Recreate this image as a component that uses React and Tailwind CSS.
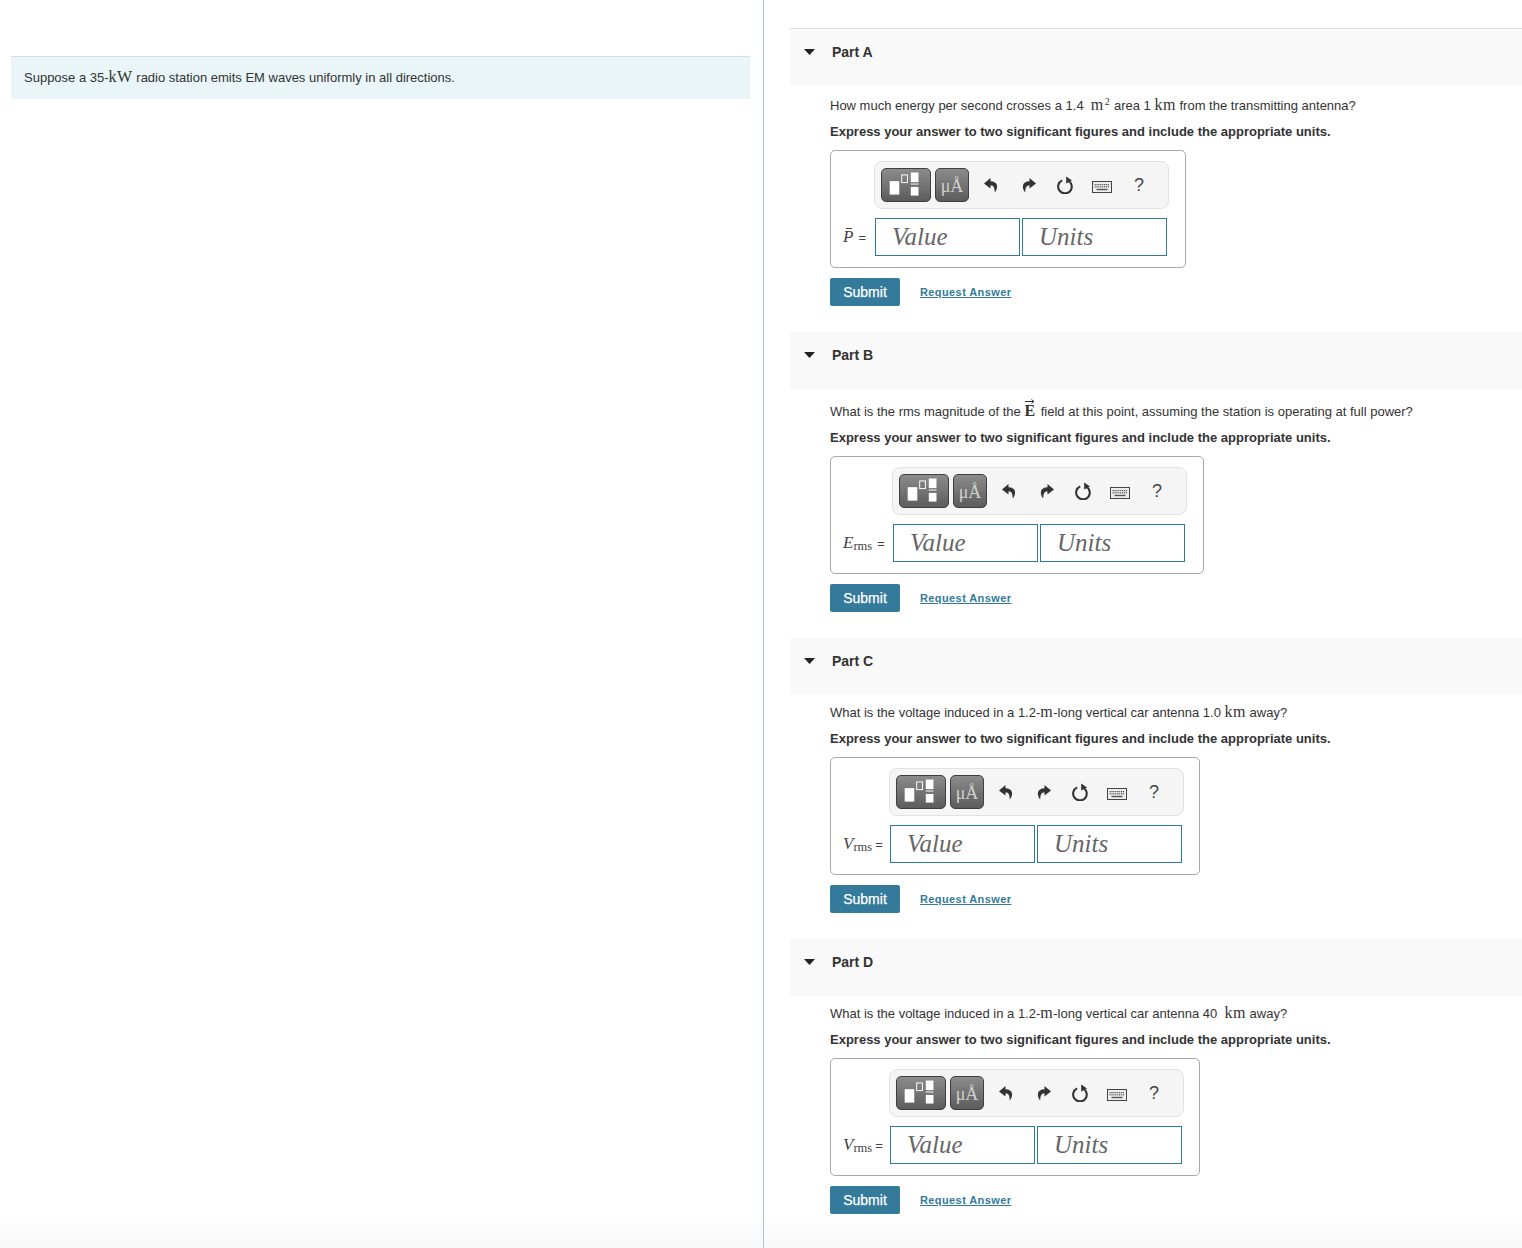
import React from "react";

function Math({ children }) {
  return <span className="font-['Liberation_Serif',serif] text-[16px] tracking-[0.5px] text-[#333]">{children}</span>;
}

function TemplateIcon() {
  return (
    <svg width="50" height="34" viewBox="0 0 50 34" className="block">
      <rect x="8" y="13" width="10" height="14" fill="#fff" />
      <rect x="20.5" y="6.5" width="6" height="8" fill="none" stroke="#fff" />
      <rect x="30" y="4" width="8" height="10" fill="#fff" />
      <rect x="30" y="15.5" width="8" height="1" fill="#fff" />
      <rect x="30" y="19" width="8" height="9" fill="#fff" />
    </svg>
  );
}

function ArrowIcon({ flip }) {
  return (
    <svg width="16" height="16" viewBox="0 0 16 16" className={flip ? "block -scale-x-100" : "block"}>
      <path d="M7.5 1 L1 6.4 L7.5 11.6 V8.6 C10.6 8.6 11.6 10.4 11.8 15.5 C15.6 10.6 15.2 4.4 7.5 4.2 Z" fill="#333" />
    </svg>
  );
}

function ResetIcon() {
  return (
    <svg width="16" height="18" viewBox="0 0 16 18" className="block">
      <path d="M5.2 4.4 A6.8 6.8 0 1 0 11.8 5" fill="none" stroke="#333" strokeWidth="2.1" />
      <path d="M9.2 0.4 L9.2 7.4 L15 4.6 Z" fill="#333" />
    </svg>
  );
}

function KeyboardIcon() {
  const keys = [];
  for (let i = 0; i < 8; i++) {
    keys.push(<rect key={"a" + i} x={2.5 + i * 1.9} y="3" width="1.2" height="1.2" fill="#555" />);
    keys.push(<rect key={"b" + i} x={2.5 + i * 1.9} y="5.2" width="1.2" height="1.2" fill="#555" />);
  }
  return (
    <svg width="20" height="12" viewBox="0 0 20 12" className="block">
      <rect x="0.5" y="0.5" width="19" height="11" fill="#eee" stroke="#444" />
      {keys}
      <rect x="4.5" y="7.8" width="11" height="1.4" fill="#555" />
    </svg>
  );
}

function AnswerBox({ label, indent, labelWidth, padRight }) {
  return (
    <div className={padRight + " mt-[8px] w-fit rounded-[5px] border border-[#a8a8a8] pt-[10px] pb-[11px] pl-[12px]"}>
      <div className={indent + " flex"}>
        <div className="h-[48px] w-[295px] rounded-[8px] border border-[#e2e2e2] bg-[#f5f5f5] -ml-px flex items-center pl-[6px] text-[#333]">
          <div className="h-[34px] w-[50px] rounded-[5px] border border-[#3f3f3f] bg-gradient-to-b from-[#8c8c8c] to-[#5c5c5c] flex items-center justify-center overflow-hidden">
            <TemplateIcon />
          </div>
          <div className="ml-[4px] h-[34px] w-[34px] rounded-[5px] border border-[#3f3f3f] bg-gradient-to-b from-[#8c8c8c] to-[#5c5c5c] flex items-center justify-center pt-[2px] font-['Liberation_Serif',serif] text-[18px] text-[#d0d0d0]">
            μÅ
          </div>
          <div className="ml-[14px]"><ArrowIcon /></div>
          <div className="ml-[22px]"><ArrowIcon flip /></div>
          <div className="ml-[20px]"><ResetIcon /></div>
          <div className="ml-[19px] mt-[3px]"><KeyboardIcon /></div>
          <div className="ml-[22px] font-['Liberation_Sans',sans-serif] text-[18px] text-[#444]">?</div>
        </div>
      </div>
      <div className="mt-[9px] flex items-center">
        <div className={labelWidth + " shrink-0 text-[13px] text-[#444] whitespace-nowrap"}>{label}</div>
        <div className="flex gap-[2px]">
          <div className="h-[38px] w-[145px] border border-[#2f7a9c] pl-[16px] font-['Liberation_Serif',serif] text-[25px] leading-[36px] italic text-[#666]">Value</div>
          <div className="h-[38px] w-[145px] border border-[#2f7a9c] pl-[16px] font-['Liberation_Serif',serif] text-[25px] leading-[36px] italic text-[#666]">Units</div>
        </div>
      </div>
    </div>
  );
}

function Part({ name, headerHeight, top, question, label, indent, labelWidth, padRight, last }) {
  return (
    <section className={last ? "" : "mb-[26px]"}>
      <div className={headerHeight + " bg-[#f9f9f9] flex items-start pt-[13px] pl-[14px]"}>
        <svg width="11" height="6" viewBox="0 0 11 6" className="mt-[7px] block">
          <path d="M0 0 H11 L5.5 6 Z" fill="#222" />
        </svg>
        <h2 className="ml-[17px] text-[14px] leading-[20px] font-bold text-[#333]">{name}</h2>
      </div>
      <div className={top + " pl-[40px] text-[13px] text-[#333]"}>
        <p className="h-[20px] leading-[20px] whitespace-nowrap">{question}</p>
        <p className="mt-[7px] h-[20px] leading-[20px] font-bold whitespace-nowrap">
          Express your answer to two significant figures and include the appropriate units.
        </p>
        <AnswerBox label={label} indent={indent} labelWidth={labelWidth} padRight={padRight} />
        <div className="mt-[10px] flex items-center">
          <button className="h-[28px] w-[70px] rounded-[2px] bg-[#337a9b] text-[14px] text-white [-webkit-text-stroke:0.25px_white]">Submit</button>
          <a className="ml-[20px] text-[11px] font-bold tracking-[0.4px] text-[#337a9b] underline">Request Answer</a>
        </div>
      </div>
    </section>
  );
}

const pLabel = (
  <span>
    <span className="relative font-['Liberation_Serif',serif] text-[17px] italic">
      P
      <span className="absolute left-[3px] top-[1px] h-px w-[6px] bg-[#444]" />
    </span>
    <span className="ml-[5px]">=</span>
  </span>
);

const eLabel = (
  <span>
    <span className="font-['Liberation_Serif',serif] text-[17px] italic">E</span>
    <span className="relative top-[2px] font-['Liberation_Serif',serif] text-[12.5px]">rms</span>
    <span className="ml-[5px]">=</span>
  </span>
);

const vLabel = (
  <span>
    <span className="font-['Liberation_Serif',serif] text-[17px] italic">V</span>
    <span className="relative top-[2px] font-['Liberation_Serif',serif] text-[12.5px]">rms</span>
    <span className="ml-[3px]">=</span>
  </span>
);

export default function App() {
  return (
    <div className="flex h-[1248px] relative overflow-hidden bg-white font-['Liberation_Sans',Arial,sans-serif]">
      <div className="relative z-10 w-[764px] shrink-0 border-r border-[#b9c3cc] pt-[56px] pl-[11px] pr-[13px]">
        <div className="h-[43px] border-t border-[#dcdcdc] bg-[#e9f5f7] pl-[13px] text-[13px] leading-[39px] text-[#333]">
          Suppose a 35-<Math>kW</Math> radio station emits EM waves uniformly in all directions.
        </div>
      </div>

      <div className="flex-1 pt-[28px] pl-[26px]">
        <div className="border-t border-[#dcdcdc]">
          <Part
            name="Part A"
            headerHeight="h-[56px]"
            top="pt-[10px]"
            indent="ml-[32px]"
            labelWidth="w-[32px]"
            padRight="pr-[16px]"
            label={pLabel}
            question={
              <>
                How much energy per second crosses a 1.4 &nbsp;<Math>m<sup className="ml-px text-[10px]">2</sup></Math> area 1 <Math>km</Math> from the transmitting antenna?
              </>
            }
          />
        </div>
        <Part
          name="Part B"
          headerHeight="h-[57px]"
          top="pt-[12px]"
          indent="ml-[50px]"
          labelWidth="w-[50px]"
          padRight="pr-[16px]"
          label={eLabel}
          question={
            <>
              What is the rms magnitude of the{" "}
              <span className="relative mr-[2px] font-['Liberation_Serif',serif] text-[16px] font-bold">
                E
                <svg width="10" height="5" viewBox="0 0 10 5" className="absolute left-[1px] -top-[3px]">
                  <path d="M0 2.5 H9 M6.5 0.5 L9 2.5 L6.5 4.5" fill="none" stroke="#333" />
                </svg>
              </span>{" "}
              field at this point, assuming the station is operating at full power?
            </>
          }
        />
        <Part
          name="Part C"
          headerHeight="h-[57px]"
          top="pt-[7px]"
          indent="ml-[47px]"
          labelWidth="w-[47px]"
          padRight="pr-[15px]"
          label={vLabel}
          question={
            <>
              What is the voltage induced in a 1.2-<Math>m</Math>-long vertical car antenna 1.0 <Math>km</Math> away?
            </>
          }
        />
        <Part
          name="Part D"
          headerHeight="h-[57px]"
          top="pt-[7px]"
          indent="ml-[47px]"
          labelWidth="w-[47px]"
          padRight="pr-[15px]"
          label={vLabel}
          last
          question={
            <>
              What is the voltage induced in a 1.2-<Math>m</Math>-long vertical car antenna 40 &nbsp;<Math>km</Math> away?
            </>
          }
        />
      </div>

      {/* fade along the bottom edge */}
      <div className="pointer-events-none absolute inset-x-0 bottom-0 h-[34px] bg-gradient-to-b from-transparent to-[#f7f7f7]" />
    </div>
  );
}
